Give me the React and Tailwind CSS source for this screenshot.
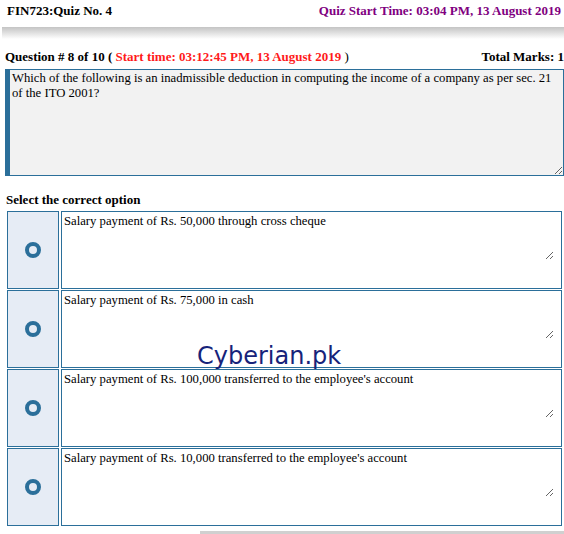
import React from "react";

const options = [
  "Salary payment of Rs. 50,000 through cross cheque",
  "Salary payment of Rs. 75,000 in cash",
  "Salary payment of Rs. 100,000 transferred to the employee's account",
  "Salary payment of Rs. 10,000 transferred to the employee's account",
];

const serif = { fontFamily: '"Liberation Serif", serif' };

function Option({ text }) {
  return (
    <div className="flex gap-[2px] h-[78px]">
      <div className="w-[52px] shrink-0 bg-[#e6ecf5] border border-[#2b6f9a] flex items-center justify-center">
        <span className="block w-[16px] h-[16px] rounded-full border-[4px] border-[#2b6f9a]"></span>
      </div>
      <div className="w-[501px] h-full border border-[#2b6f9a] bg-white">
        <textarea
          readOnly
          value={text}
          className="block w-[492px] h-[48px] border-0 bg-white px-[2px] pt-[2px] text-[12.7px] leading-[15px] text-black outline-none"
          style={serif}
        ></textarea>
      </div>
    </div>
  );
}

export default function App() {
  return (
    <div className="relative w-[564px] h-[534px] bg-white overflow-hidden text-black" style={serif}>
      <div className="flex justify-between items-center pl-[7px] pr-[3px] pt-[2px] h-[20px] font-bold text-[13px]">
        <span>FIN723:Quiz No. 4</span>
        <span className="text-[#800080]">Quiz Start Time: 03:04 PM, 13 August 2019</span>
      </div>
      <div className="ml-[2px] mt-[7px] h-[12px] bg-gradient-to-b from-[#c4c4c4] to-white"></div>

      <div className="flex justify-between items-center mt-[11px] pl-[5px] h-[14px] text-[13px] whitespace-nowrap">
        <span>
          <b>Question # 8 of 10 ( </b>
          <b className="text-[#ff1a1a]">Start time: 03:12:45 PM, 13 August 2019</b>
          <span> )</span>
        </span>
        <b>Total Marks: 1</b>
      </div>

      <textarea
        readOnly
        value="Which of the following is an inadmissible deduction in computing the income of a company as per sec. 21 of the ITO 2001?"
        className="block mt-[5px] ml-[5px] w-[559px] h-[107px] bg-[#f2f2f2] border border-[#2b6f9a] border-l-[5px] pl-[2px] pt-[1px] pr-[8px] text-[12.7px] leading-[15px] outline-none"
        style={serif}
      ></textarea>

      <div className="mt-[17px] pl-[6px] font-bold text-[13px] h-[14px] leading-[14px]">Select the correct option</div>

      <div className="mt-[4px] ml-[7px] flex flex-col gap-[1px]">
        {options.map((o, i) => (
          <Option key={i} text={o} />
        ))}
      </div>

      <div
        className="absolute left-[197px] top-[341px] text-[24px] leading-[30px] text-[#16237a]"
        style={{ fontFamily: '"DejaVu Sans", Verdana, sans-serif' }}
      >
        Cyberian.pk
      </div>

      <div className="absolute left-[200px] right-0 bottom-0 h-[3px] bg-[#d0d0d0]"></div>
    </div>
  );
}
